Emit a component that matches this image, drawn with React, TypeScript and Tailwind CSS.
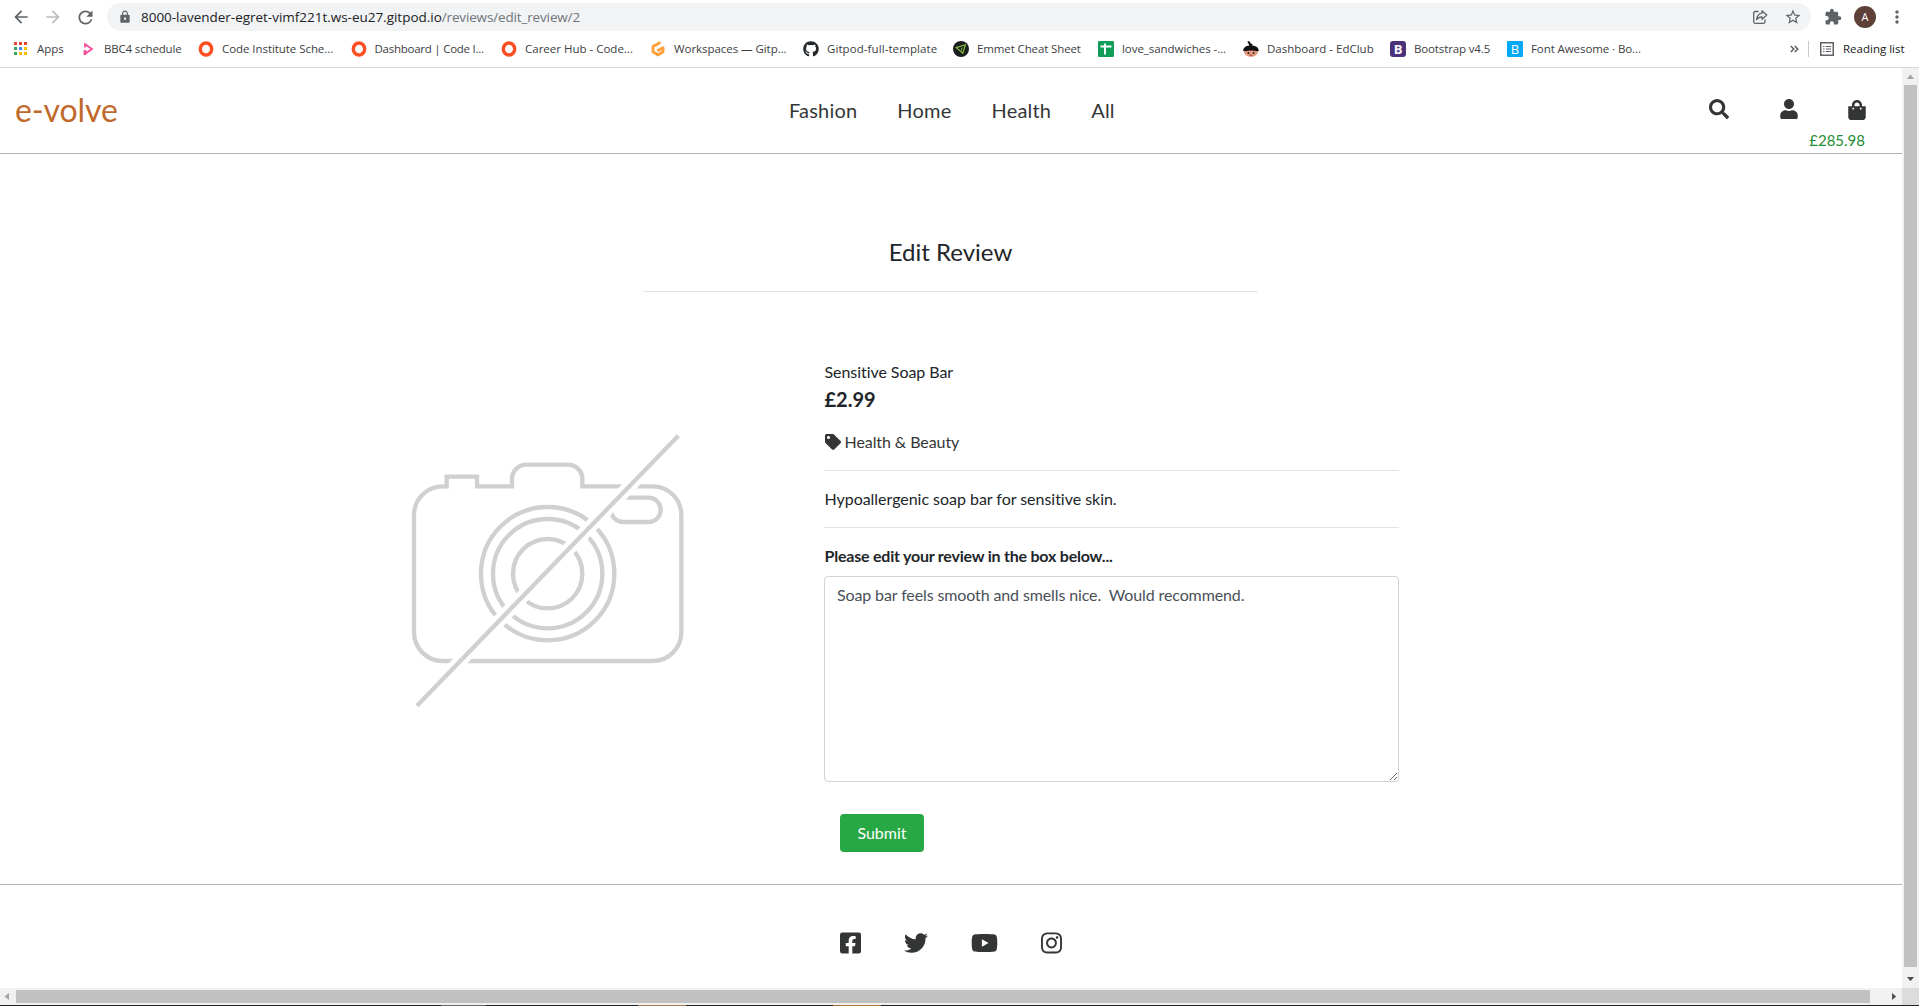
import type { ReactNode } from "react";
import { FaFacebookSquare, FaGithub, FaInstagram, FaSearch, FaShoppingBag, FaTag, FaTwitter, FaUser, FaYoutube } from "react-icons/fa";
import { MdArrowBack, MdArrowForward, MdExtension, MdLock, MdMoreVert, MdRefresh, MdStarBorder } from "react-icons/md";

function AppsIcon() {
  const colors = ["#ea4335", "#ea4335", "#ea4335", "#34a853", "#4285f4", "#fbbc04", "#34a853", "#fbbc04", "#fbbc04"];
  return (
    <svg width="16" height="16" viewBox="0 0 16 16">
      {colors.map((c, i) => (
        <rect key={i} x={2 + (i % 3) * 5} y={1 + Math.floor(i / 3) * 5} width="3" height="3" fill={c} />
      ))}
    </svg>
  );
}

function TriangleIcon() {
  return (
    <svg width="16" height="16" viewBox="0 0 16 16" fill="none" stroke="#f54997" strokeWidth="1.700">
      <path d="M5 6.500V3.200L12 8 5 12.800V9.800" />
      <path d="M5 9.200v4.500" strokeWidth="2.800" />
    </svg>
  );
}

function RingIcon() {
  return (
    <svg width="16" height="16" viewBox="0 0 16 16">
      <ellipse cx="8" cy="8" rx="5.700" ry="6" fill="none" stroke="#fc4f23" strokeWidth="3.400" />
    </svg>
  );
}

function GitpodIcon() {
  return (
    <svg width="16" height="16" viewBox="0 0 16 16" fill="none" stroke="#ffa03a" strokeWidth="2.900" strokeLinejoin="round" strokeLinecap="round">
      <path d="M9.300 1.900 3 5.400v5.400L8 13.900l5-3.100V6.700L8.300 9.300" />
    </svg>
  );
}

function EmmetIcon() {
  return (
    <svg width="16" height="16" viewBox="0 0 16 16">
      <circle cx="8" cy="8" r="8" fill="#1a1d1f" />
      <path d="M3.200 6.600 12.300 3.800 9.800 12.300Z" fill="none" stroke="#8cc63f" strokeWidth="1.200" />
      <path d="M8.200 9.500 9.200 6.500" stroke="#8cc63f" strokeWidth="1" />
    </svg>
  );
}

function SheetsIcon() {
  return (
    <svg width="16" height="16" viewBox="0 0 16 16">
      <rect width="16" height="16" rx="1.200" fill="#0f9d58" />
      <path d="M2.500 5.500h11M7 2.500v11" stroke="#fff" strokeWidth="2" />
    </svg>
  );
}

function NinjaIcon() {
  return (
    <svg width="16" height="16" viewBox="0 0 16 16">
      <ellipse cx="8" cy="11.300" rx="6.800" ry="4.600" fill="#e99a80" />
      <path d="M.2 10C.2 6.800 2.600 5 6.300 4.600L5.800 3.200 4.300.8 6.200.1 7.600 2.200 9.600 3.200 9.200 4.600C13 4.900 15.800 6.800 15.800 10l-1.800.2c-4-.9-8-.9-12 0Z" fill="#111" />
      <circle cx="5.400" cy="11.900" r="1" fill="#222" />
      <circle cx="10.600" cy="11.900" r="1" fill="#222" />
      <path d="M6.600 14.200h2.800" stroke="#7a2f22" strokeWidth=".8" />
    </svg>
  );
}

function LetterB({ className }: { className: string }) {
  return <span className={"flex size-4 items-center justify-center text-[13px] leading-4 text-white " + className}>B</span>;
}

function ShareIcon() {
  return (
    <svg width="16" height="16" viewBox="0 0 16 16" fill="none" stroke="#5f6368" strokeWidth="1.300" strokeLinejoin="round">
      <path d="M6.500 2.500H3.200a1.500 1.500 0 0 0-1.500 1.500v8.800a1.500 1.500 0 0 0 1.500 1.500h8.300a1.500 1.500 0 0 0 1.500-1.500v-2.300" />
      <path d="M10 1.800 14.700 6 10 10.200V7.800C7.400 7.800 5.800 8.700 4.700 10.700 5 7.400 6.600 4.700 10 4.200Z" />
    </svg>
  );
}

function ReadingListIcon() {
  return (
    <svg width="14" height="14" viewBox="0 0 14 14" fill="none" stroke="#5f6368">
      <rect x=".75" y=".75" width="12.500" height="12.500" strokeWidth="1.500" />
      <path d="M3 4.500h1.500M3 7h1.500M3 9.500h1.500M5.800 4.500H11M5.800 7H11M5.800 9.500H11" strokeWidth="1.200" />
    </svg>
  );
}

/* Placeholder drawn when a product has no photo: a camera with a slash. */
function NoImage() {
  return (
    <svg className="mt-15 size-[300px] shrink-0" viewBox="0 0 900 900" fill="none" stroke="#d0d0d0" strokeWidth="13">
      <path d="M140 199H128A86 86 0 0 0 42 285V637A86 86 0 0 0 128 723H758A86 86 0 0 0 844 637V285A86 86 0 0 0 758 199H547V177A43 43 0 0 0 504 134H379A43 43 0 0 0 336 177V199H231V170H140Z" />
      <circle cx="443" cy="461" r="200" />
      <circle cx="443" cy="461" r="164" />
      <circle cx="443" cy="461" r="104" />
      <rect x="633" y="233" width="149" height="73" rx="36" />
      <path d="M835 47 51 857" stroke="#fff" strokeWidth="40" />
      <path d="M835 47 51 857" />
    </svg>
  );
}

type Bookmark = { label: string; icon: ReactNode; width: string; tracking: string };

const bookmarks: Bookmark[] = [
  { label: "Apps", icon: <AppsIcon />, width: "w-[68px]", tracking: "pl-px" },
  { label: "BBC4 schedule", icon: <TriangleIcon />, width: "w-[118px]", tracking: "tracking-[-0.16px]" },
  { label: "Code Institute Sche...", icon: <RingIcon />, width: "w-[152.5px]", tracking: "tracking-[-0.06px]" },
  { label: "Dashboard | Code I...", icon: <RingIcon />, width: "w-[150.5px]", tracking: "tracking-[-0.25px]" },
  { label: "Career Hub - Code...", icon: <RingIcon />, width: "w-[149px]", tracking: "" },
  { label: "Workspaces — Gitp...", icon: <GitpodIcon />, width: "w-[153px]", tracking: "tracking-[-0.05px]" },
  { label: "Gitpod-full-template", icon: <FaGithub size={16} color="#24292e" />, width: "w-[150px]", tracking: "tracking-[0.08px]" },
  { label: "Emmet Cheat Sheet", icon: <EmmetIcon />, width: "w-[145px]", tracking: "tracking-[-0.12px]" },
  { label: "love_sandwiches -...", icon: <SheetsIcon />, width: "w-[145px]", tracking: "tracking-[-0.05px]" },
  { label: "Dashboard - EdClub", icon: <NinjaIcon />, width: "w-[147px]", tracking: "" },
  { label: "Bootstrap v4.5", icon: <LetterB className="rounded-[3px] bg-[#4b3278] font-bold" />, width: "w-[117px]", tracking: "tracking-[-0.13px]" },
  { label: "Font Awesome · Bo...", icon: <LetterB className="rounded-[1px] bg-[#03a9f4]" />, width: "w-[150px]", tracking: "tracking-[-0.08px]" },
];

function BrowserChrome() {
  return (
    <div className="h-[68px] shrink-0 border-b border-[#d5d7da] bg-white font-['Open_Sans',sans-serif] text-[#3c4043]">
      <div className="flex h-[34px] items-center pl-[11px] text-[#5f6368]">
        <MdArrowBack size={20} />
        <MdArrowForward size={20} className="ml-3 text-[#babcbe]" />
        <MdRefresh size={21} className="ml-3" />
        <div className="ml-[11px] flex h-7 w-[1704px] items-center rounded-full bg-[#f1f3f4] pl-[11px] pr-[9px]">
          <MdLock size={14} />
          <span className="ml-[9px] text-[13.5px] leading-5 tracking-[-0.02px] text-[#202124]">
            8000-lavender-egret-vimf221t.ws-eu27.gitpod.io<span className="tracking-[-0.15px] text-[#70757a]">/reviews/edit_review/2</span>
          </span>
          <span className="ml-auto flex items-center gap-4">
            <ShareIcon />
            <MdStarBorder size={18} />
          </span>
        </div>
        <MdExtension size={18} className="ml-[13px]" />
        <span className="ml-3 flex size-[22px] items-center justify-center rounded-full bg-[#5d4037] text-[11px] text-white">A</span>
        <MdMoreVert size={20} className="ml-[11px]" />
      </div>
      <div className="flex h-[30px] items-center pl-3 text-[11.5px] leading-4">
        {bookmarks.map((b) => (
          <div key={b.label} className={"flex shrink-0 items-center gap-2 whitespace-nowrap " + b.width}>
            <span className="flex size-4 shrink-0 items-center justify-center">{b.icon}</span>
            <span className={"-mt-px " + b.tracking}>{b.label}</span>
          </div>
        ))}
        <svg className="ml-[133px] shrink-0" width="9" height="8" viewBox="0 0 9 8" fill="none" stroke="#5f6368" strokeWidth="1.600">
          <path d="M.8 1 3.700 4 .8 7M4.800 1 7.700 4 4.800 7" />
        </svg>
        <span className="ml-[9px] h-4 w-px bg-[#c8cacd]" />
        <span className="ml-[11px]"><ReadingListIcon /></span>
        <span className="-mt-px ml-[9px] whitespace-nowrap text-[#202124]">Reading list</span>
      </div>
    </div>
  );
}

function SiteHeader() {
  return (
    <header className="grid h-[86px] shrink-0 grid-cols-[789px_1fr_194px] grid-rows-[85px] border-b border-[#b3b3b3] text-[#343635]">
      <a className="flex items-center pl-[15px] pb-px text-[32px] tracking-[-0.1px] text-[#c0692b]">e-volve</a>
      <nav className="flex items-center gap-10 pb-[2px] text-xl tracking-[0.2px]">
        <a>Fashion</a>
        <a>Home</a>
        <a>Health</a>
        <a>All</a>
      </nav>
      <div className="pt-[31px]">
        <div className="ml-px flex h-5 text-xl">
          <FaSearch />
          <FaUser className="ml-[50px]" />
          <FaShoppingBag className="ml-[48px] mt-px" />
        </div>
        <p className="mt-[11px] pr-[37px] text-right text-[15px] leading-5 text-[#1f8f35]">£285.98</p>
      </div>
    </header>
  );
}

function ReviewForm() {
  return (
    <div className="ml-[124px] flex w-[575px] flex-col text-base leading-6">
      <p className="pl-[0.5px] tracking-[-0.06px]">Sensitive Soap Bar</p>
      <p className="pl-[0.5px] text-xl leading-[30px] font-bold">£2.99</p>
      <p className="mt-4 flex items-center gap-1 pl-[0.5px] tracking-[-0.08px] text-[#343635]">
        <FaTag size={16} /> Health &amp; Beauty
      </p>
      <hr className="my-4 border-[#e4e4e4]" />
      <p className="pl-[0.5px] tracking-[-0.03px]">Hypoallergenic soap bar for sensitive skin.</p>
      <hr className="my-4 border-[#e4e4e4]" />
      <label className="pl-[0.5px] font-bold tracking-[-0.22px]">Please edit your review in the box below...</label>
      <textarea
        className="mt-2 h-[206px] w-full resize-y rounded border border-[#ced4da] px-3 py-1.5 tracking-[-0.12px] text-[#495057]"
        defaultValue={"Soap bar feels smooth and smells nice.  Would recommend."}
      />
      <button className="mt-8 mb-8 ml-4 h-[38px] w-[84px] rounded bg-[#28a745] text-white">Submit</button>
    </div>
  );
}

function VerticalScrollbar() {
  return (
    <div className="flex w-[17px] flex-col items-center bg-[#f1f1f1]">
      <svg width="17" height="17" viewBox="0 0 17 17"><path d="M8.500 6.500 12 11H5Z" fill="#a3a3a3" /></svg>
      <div className="h-[882px] w-[13px] bg-[#c1c1c1]" />
      <svg className="mt-auto" width="17" height="17" viewBox="0 0 17 17"><path d="M5 6h7L8.500 10.200Z" fill="#505050" /></svg>
    </div>
  );
}

function HorizontalScrollbar() {
  return (
    <div className="flex h-[17px] shrink-0 items-center bg-[#f1f1f1]">
      <svg width="16" height="17" viewBox="0 0 16 17"><path d="M4.500 8.500 9 5v7Z" fill="#a3a3a3" /></svg>
      <div className="h-[13px] w-[1854px] bg-[#c1c1c1]" />
      <svg className="ml-auto" width="17" height="17" viewBox="0 0 17 17"><path d="M7 5v7l4.200-3.500Z" fill="#505050" /></svg>
      <div className="h-full w-[17px] bg-[#dcdcdc]" />
    </div>
  );
}

export default function App() {
  return (
    <div className="flex h-[1006px] w-[1919px] flex-col overflow-hidden bg-white">
      <BrowserChrome />
      <div className="flex h-[920px] shrink-0">
        <div className="flex w-[1902px] flex-col font-['Lato',sans-serif] text-[#212529]">
          <SiteHeader />
          <main>
            <h1 className="ml-[643px] mt-[83px] h-[55px] w-[615px] border-b border-[#e4e4e4] text-center text-2xl leading-[29px]">Edit Review</h1>
            <div className="mt-[68px] flex pl-[400px]">
              <NoImage />
              <ReviewForm />
            </div>
          </main>
          <footer className="flex h-[104px] items-center border-t border-[#b3b3b3] pt-[13px] pl-[839.5px] text-2xl text-[#343635]">
            <FaFacebookSquare className="w-[21px]" />
            <FaTwitter className="ml-[43px]" />
            <FaYoutube className="ml-[43px] w-[27px]" />
            <FaInstagram className="ml-[43.5px] w-[21px]" />
          </footer>
        </div>
        <VerticalScrollbar />
      </div>
      <HorizontalScrollbar />
      <div className="flex h-px shrink-0 bg-[#1d2528]">
        <span className="ml-[441px] w-[45px] bg-[#62676a]" />
        <span className="ml-[152px] w-[48px] bg-[#a87a52]" />
        <span className="ml-[147px] w-[48px] bg-[#b0713a]" />
      </div>
    </div>
  );
}
